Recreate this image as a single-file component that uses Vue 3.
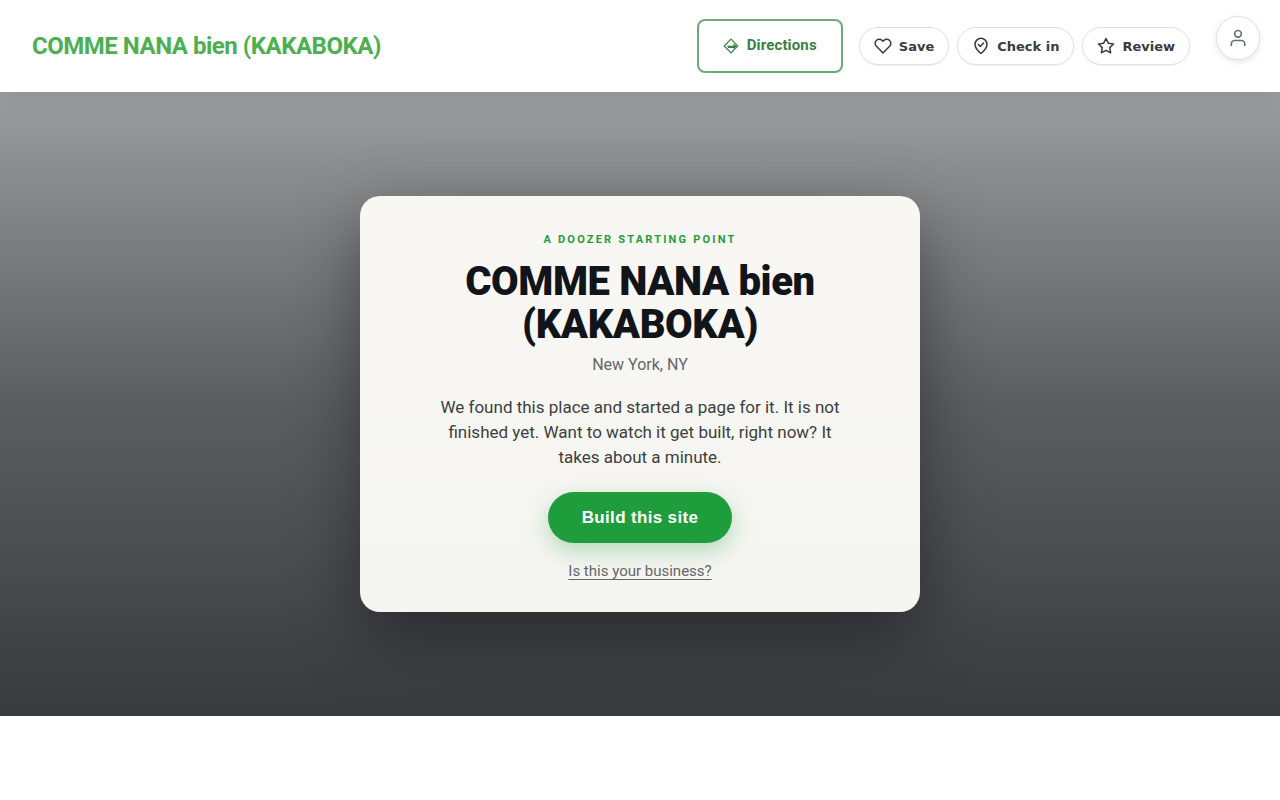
<script setup>
const name = 'COMME NANA bien (KAKABOKA)'
const actions = [
  {
    label: 'Save',
    paths: ['M20.84 4.61a5.5 5.5 0 0 0-7.78 0L12 5.67l-1.06-1.06a5.5 5.5 0 0 0-7.78 7.78l1.06 1.06L12 21.23l7.78-7.78 1.06-1.06a5.5 5.5 0 0 0 0-7.78z'],
  },
  {
    label: 'Check in',
    paths: ['M12 22s8-6.2 8-12.2a8 8 0 0 0-16 0C4 15.8 12 22 12 22z', 'M8.500 10l2.500 2.500 4.500-4.500'],
  },
  {
    label: 'Review',
    paths: ['M12 2l3.090 6.260L22 9.270l-5 4.870 1.180 6.880L12 17.770l-6.180 3.250L7 14.140 2 9.270l6.910-1.010L12 2z'],
  },
]
</script>

<template>
  <div class="page">
    <header class="header">
      <a class="brand" href="#">{{ name }}</a>
      <nav class="nav">
        <a class="directions" href="#">
          <svg class="sign" viewBox="0 0 16 16" aria-hidden="true">
            <path class="outline" d="M8 1.200L14.800 8L8 14.800L1.200 8z" />
            <path class="arrow" d="M4 7.700h6.500V5.500L13.700 8.300l-3.200 2.800V9.900H5.200z" />
          </svg>
          <span>Directions</span>
        </a>
        <div class="actions">
          <button v-for="a in actions" :key="a.label" class="pill" type="button">
            <svg viewBox="0 0 24 24" aria-hidden="true">
              <path v-for="p in a.paths" :key="p" :d="p" />
            </svg>
            <span>{{ a.label }}</span>
          </button>
        </div>
      </nav>
      <button class="account" type="button" aria-label="Account">
        <svg viewBox="0 0 24 24" aria-hidden="true">
          <path d="M20 21v-2a4 4 0 0 0-4-4H8a4 4 0 0 0-4 4v2" />
          <circle cx="12" cy="7" r="4" />
        </svg>
      </button>
    </header>

    <main class="hero">
      <section class="card">
        <p class="eyebrow">A DOOZER STARTING POINT</p>
        <h1>{{ name }}</h1>
        <p class="place">New York, NY</p>
        <p class="intro">
          We found this place and started a page for it. It is not finished yet.
          Want to watch it get built, right now? It takes about a minute.
        </p>
        <button class="build" type="button">Build this site</button>
        <a class="claim" href="#">Is this your business?</a>
      </section>
    </main>
  </div>
</template>

<style>
body {
  margin: 0;
  background: #fff;
}
</style>

<style scoped>
.page {
  font-family: Roboto, "Liberation Sans", sans-serif;
}
.header {
  position: relative;
  display: flex;
  align-items: center;
  justify-content: space-between;
  box-sizing: border-box;
  min-height: 92px;
  padding: 16px 90px 16px 32px;
  background: #fff;
  box-shadow: 0 2px 20px rgba(0, 0, 0, 0.08);
}
.brand {
  color: #4caf50;
  font-size: 24px;
  font-weight: 700;
  letter-spacing: -0.02em;
  text-decoration: none;
}
.nav {
  display: flex;
  align-items: center;
  gap: 16px;
}
.directions {
  display: flex;
  align-items: center;
  gap: 8px;
  box-sizing: border-box;
  height: 54px;
  padding: 0 24px 2px;
  border: 2px solid #6fa978;
  border-radius: 8px;
  color: #388043;
  font-size: 15px;
  font-weight: 700;
  letter-spacing: 0.01em;
  text-decoration: none;
}
.sign {
  width: 16px;
  height: 16px;
  margin-top: 2px;
}
.outline {
  fill: none;
  stroke: currentColor;
  stroke-width: 1.2;
}
.arrow {
  fill: currentColor;
}
.actions {
  display: flex;
  gap: 8px;
}
.pill {
  display: flex;
  align-items: center;
  gap: 7px;
  box-sizing: border-box;
  height: 38px;
  padding: 0 14px;
  border: 1px solid #dfe1e4;
  border-radius: 19px;
  background: #fff;
  box-shadow: 0 1px 2px rgba(0, 0, 0, 0.05);
  color: #393b40;
  font-family: "DejaVu Sans", sans-serif;
  font-size: 13px;
  font-weight: 700;
}
.pill svg {
  width: 18px;
  height: 18px;
  fill: none;
  stroke: currentColor;
  stroke-width: 2;
  stroke-linecap: round;
  stroke-linejoin: round;
}
.account {
  position: absolute;
  top: 16px;
  right: 20px;
  display: flex;
  align-items: center;
  justify-content: center;
  box-sizing: border-box;
  width: 44px;
  height: 44px;
  padding: 0;
  border: 1px solid #e1e2e5;
  border-radius: 50%;
  background: #fff;
  box-shadow: 0 2px 6px rgba(0, 0, 0, 0.1);
  color: #6b6e75;
}
.account svg {
  width: 20px;
  height: 20px;
  fill: none;
  stroke: currentColor;
  stroke-width: 2;
  stroke-linecap: round;
  stroke-linejoin: round;
}
.hero {
  display: flex;
  align-items: center;
  justify-content: center;
  box-sizing: border-box;
  min-height: 78vh;
  padding: 48px 24px;
  background: linear-gradient(180deg, #9b9c9d 0%, #5c5d61 50%, #383b3e 100%);
}
.card {
  display: flex;
  flex-direction: column;
  align-items: center;
  box-sizing: border-box;
  width: 100%;
  max-width: 560px;
  padding: 36px 40px 31px;
  border-radius: 20px;
  background: linear-gradient(180deg, #f8f7f3, #f5f5f1);
  box-shadow: 0 24px 70px rgba(0, 0, 0, 0.4);
  text-align: center;
}
.eyebrow {
  margin: 0 0 13px;
  color: #1f9d3d;
  font-size: 11px;
  font-weight: 700;
  line-height: 15px;
  letter-spacing: 0.2em;
}
h1 {
  margin: 0 0 8px;
  max-width: 400px;
  color: #111418;
  font-size: 40px;
  font-weight: 900;
  line-height: 43px;
  letter-spacing: -0.01em;
}
.place {
  margin: 0 0 20px;
  color: #63666a;
  font-size: 16px;
  line-height: 21px;
}
.intro {
  margin: 0 0 22px;
  max-width: 420px;
  color: #3c3f43;
  font-size: 17px;
  line-height: 25px;
}
.build {
  height: 51px;
  padding: 0 34px;
  border: 0;
  border-radius: 26px;
  background: #1f9d3d;
  box-shadow: 0 8px 22px rgba(31, 157, 61, 0.3);
  color: #fff;
  font-family: "Liberation Sans", sans-serif;
  font-size: 17px;
  font-weight: 700;
  letter-spacing: 0.02em;
}
.claim {
  margin-top: 18px;
  color: #63666a;
  font-size: 15px;
  line-height: 20px;
  text-decoration: underline;
  text-underline-offset: 3px;
}
</style>
